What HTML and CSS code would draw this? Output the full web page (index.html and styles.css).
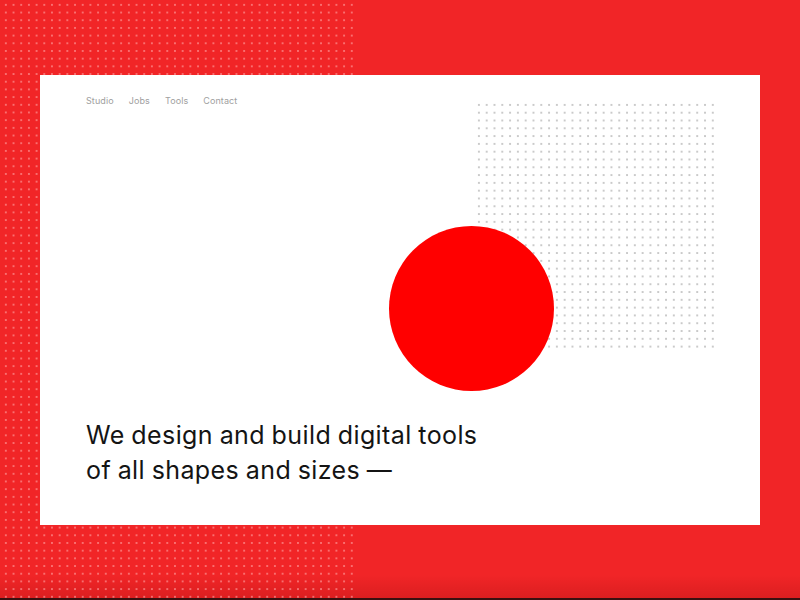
FILE: index.html
```html
<!DOCTYPE html>
<html>
<head>
<meta charset="utf-8">
<link rel="stylesheet" href="styles.css">
</head>
<body>
<div class="page">
  <div class="card">
    <nav class="nav">
      <a>Studio</a>
      <a>Jobs</a>
      <a>Tools</a>
      <a>Contact</a>
    </nav>
    <div class="art">
      <div class="grid"></div>
      <div class="circle"></div>
    </div>
    <h1 class="headline">We design and build digital tools<br>of all shapes and sizes —</h1>
  </div>
</div>
</body>
</html>
```
FILE: styles.css
```css
html, body {
  margin: 0;
  padding: 0;
  width: 800px;
  height: 600px;
  overflow: hidden;
}
body {
  background: #f12527;
  font-family: Inter, "Liberation Sans", sans-serif;
}
.page {
  position: relative;
  height: 600px;
  box-sizing: border-box;
  padding: 75px 40px 75px 40px;
  background:
    linear-gradient(to bottom, rgba(0,0,0,0) 575px, rgba(120,0,0,0.18) 598px, #3a1010 598px);
}
.page::before {
  content: "";
  position: absolute;
  left: 2px;
  top: 1px;
  width: 356px;
  height: 598px;
  background-image: radial-gradient(circle, rgba(255,160,160,0.6) 0.7px, rgba(255,160,160,0) 1.1px);
  background-size: 7.7px 7.7px;
}
.card {
  position: relative;
  z-index: 1;
  height: 450px;
  background: #fff;
  box-sizing: border-box;
  padding: 20px 0 37px 46px;
  display: flex;
  flex-direction: column;
}
.nav {
  display: flex;
  gap: 15px;
  font-size: 9px;
  color: #a0a0a0;
  letter-spacing: 0.1px;
}
.art {
  flex: 1;
  position: relative;
}
.grid {
  position: absolute;
  left: 389px;
  top: -5px;
  width: 242px;
  height: 248px;
  background-image: radial-gradient(circle, rgba(150,150,150,0.65) 0.6px, rgba(150,150,150,0) 1px);
  background-size: 7.8px 7.8px;
}
.circle {
  position: absolute;
  left: 303px;
  top: 120px;
  width: 165px;
  height: 165px;
  border-radius: 50%;
  background: #ff0000;
}
.headline {
  margin: 0;
  font-weight: 400;
  font-size: 25px;
  line-height: 35px;
  color: #141414;
  letter-spacing: 0.4px;
  word-spacing: -0.8px;
}
```
